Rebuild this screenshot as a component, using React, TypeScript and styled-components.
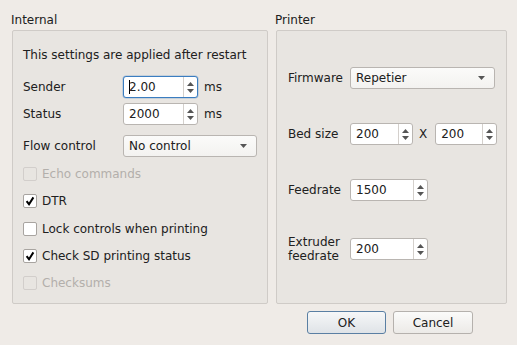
import React from "react";
import styled, { createGlobalStyle } from "styled-components";

const colors = {
  window: "#efebe7",
  group: "#e8e5e1",
  frame: "#cfcbc7",
  field: "#ffffff",
  fieldBorder: "#b9b5b1",
  focus: "#3b7dc0",
  text: "#202020",
  disabled: "#b3afab",
  arrow: "#555555",
};

const GlobalStyle = createGlobalStyle`
  html, body {
    margin: 0;
    padding: 0;
    background: ${colors.window};
  }
  body {
    font-family: "DejaVu Sans", "Liberation Sans", sans-serif;
    font-size: 12px;
    color: ${colors.text};
  }
`;

const Window = styled.div`
  width: 517px;
  height: 345px;
  box-sizing: border-box;
  padding: 13px 0 0 12px;
  background: ${colors.window};
`;

const Columns = styled.div`
  display: flex;
  gap: 8px;
`;

const Group = styled.div<{ $w: number }>`
  width: ${(p) => p.$w}px;
  display: flex;
  flex-direction: column;
`;

const GroupTitle = styled.div`
  margin-left: -1px;
  line-height: 14px;
  height: 14px;
  margin-bottom: 3px;
`;

const Frame = styled.div<{ $pl: number }>`
  height: 274px;
  box-sizing: border-box;
  border: 1px solid ${colors.frame};
  border-radius: 2px;
  background: ${colors.group};
  padding-left: ${(p) => p.$pl}px;
  display: flex;
  flex-direction: column;
`;

const Note = styled.div`
  margin-top: 17px;
  line-height: 14px;
  height: 14px;
`;

const Row = styled.div<{ $top: number; $h?: number }>`
  display: flex;
  align-items: center;
  margin-top: ${(p) => p.$top}px;
  height: ${(p) => p.$h ?? 22}px;
`;

const Label = styled.div<{ $w: number }>`
  width: ${(p) => p.$w}px;
  flex: none;
  line-height: 14px;
`;

const Unit = styled.span`
  margin-left: 6px;
`;

const Field = styled.div<{ $w: number; $focus?: boolean }>`
  width: ${(p) => p.$w}px;
  height: 22px;
  box-sizing: border-box;
  display: flex;
  align-items: stretch;
  background: ${colors.field};
  border: 1px solid ${(p) => (p.$focus ? colors.focus : colors.fieldBorder)};
  border-radius: 3px;
  box-shadow: ${(p) => (p.$focus ? "0 0 0 0.5px rgba(59,125,192,0.4)" : "none")};
`;

const FieldText = styled.div`
  flex: 1;
  display: flex;
  align-items: center;
  padding-left: 5px;
  line-height: 14px;
`;

const Caret = styled.span`
  display: inline-block;
  width: 0;
  height: 14px;
  border-left: 1px solid #000;
  margin-right: -1px;
`;

const SpinButtons = styled.div`
  width: 13px;
  flex: none;
  border-left: 1px solid #d4d0cc;
  display: flex;
  flex-direction: column;
  align-items: center;
  justify-content: center;
  gap: 3px;
`;

const Combo = styled.div<{ $w: number }>`
  width: ${(p) => p.$w}px;
  height: 22px;
  box-sizing: border-box;
  display: flex;
  align-items: center;
  justify-content: space-between;
  padding: 0 9px 0 5px;
  border: 1px solid ${colors.fieldBorder};
  border-radius: 3px;
  background: linear-gradient(#fbfbfa, #f3f2f0);
`;

const Times = styled.span`
  margin: 0 8px 0 6px;
`;

const CheckRow = styled.label<{ $top: number; $disabled?: boolean }>`
  display: flex;
  align-items: center;
  gap: 5px;
  margin-top: ${(p) => p.$top}px;
  height: 14px;
  line-height: 14px;
  color: ${(p) => (p.$disabled ? colors.disabled : colors.text)};
`;

const Box = styled.span<{ $disabled?: boolean }>`
  width: 14px;
  height: 14px;
  box-sizing: border-box;
  display: flex;
  align-items: center;
  justify-content: center;
  border: 1px solid ${(p) => (p.$disabled ? "#d2cecb" : "#a8a4a0")};
  border-radius: 2px;
  background: ${(p) => (p.$disabled ? "transparent" : colors.field)};
`;

const TwoLine = styled.div`
  width: 62px;
  flex: none;
  line-height: 14px;
`;

const ButtonBar = styled.div`
  display: flex;
  gap: 7px;
  margin: 7px 0 0 295px;
`;

const Button = styled.button<{ $default?: boolean }>`
  width: ${(p) => (p.$default ? 79 : 80)}px;
  height: 23px;
  box-sizing: border-box;
  font-family: inherit;
  font-size: 12px;
  color: ${colors.text};
  border: 1px solid ${(p) => (p.$default ? "#5a7fa3" : "#b5b1ad")};
  border-radius: 3px;
  background: ${(p) =>
    p.$default
      ? "linear-gradient(#f6f7f8, #dfe3e7)"
      : "linear-gradient(#fbfbfa, #eceae7)"};
  padding: 0;
`;

const Arrow = ({ down }: { down?: boolean }) => (
  <svg width="7" height="4" viewBox="0 0 7 4">
    <path d={down ? "M0 0 L7 0 L3.5 4 Z" : "M0 4 L7 4 L3.5 0 Z"} fill={colors.arrow} />
  </svg>
);

const Spin: React.FC<{ value: string; w: number; focus?: boolean }> = ({ value, w, focus }) => (
  <Field $w={w} $focus={focus}>
    <FieldText>
      {focus && <Caret />}
      {value}
    </FieldText>
    <SpinButtons>
      <Arrow />
      <Arrow down />
    </SpinButtons>
  </Field>
);

const Select: React.FC<{ value: string; w: number }> = ({ value, w }) => (
  <Combo $w={w}>
    <span>{value}</span>
    <Arrow down />
  </Combo>
);

const Check: React.FC<{ label: string; top: number; checked?: boolean; disabled?: boolean }> = ({
  label,
  top,
  checked,
  disabled,
}) => (
  <CheckRow $top={top} $disabled={disabled}>
    <Box $disabled={disabled}>
      {checked && (
        <svg width="10" height="10" viewBox="0 0 10 10">
          <path d="M1.6 5.2 L4 8.2 L8.4 1.4" fill="none" stroke="#000" strokeWidth="2" />
        </svg>
      )}
    </Box>
    {label}
  </CheckRow>
);

export default function App() {
  return (
    <Window>
      <GlobalStyle />
      <Columns>
        <Group $w={256}>
          <GroupTitle>Internal</GroupTitle>
          <Frame $pl={10}>
            <Note>This settings are applied after restart</Note>
            <Row $top={14}>
              <Label $w={100}>Sender</Label>
              <Spin value="2.00" w={75} focus />
              <Unit>ms</Unit>
            </Row>
            <Row $top={5}>
              <Label $w={100}>Status</Label>
              <Spin value="2000" w={75} />
              <Unit>ms</Unit>
            </Row>
            <Row $top={10}>
              <Label $w={100}>Flow control</Label>
              <Select value="No control" w={134} />
            </Row>
            <Check label="Echo commands" top={10} disabled />
            <Check label="DTR" top={13} checked />
            <Check label="Lock controls when printing" top={14} />
            <Check label="Check SD printing status" top={13} checked />
            <Check label="Checksums" top={13} disabled />
          </Frame>
        </Group>
        <Group $w={231}>
          <GroupTitle>Printer</GroupTitle>
          <Frame $pl={11}>
            <Row $top={36}>
              <Label $w={62}>Firmware</Label>
              <Select value="Repetier" w={145} />
            </Row>
            <Row $top={34}>
              <Label $w={62}>Bed size</Label>
              <Spin value="200" w={63} />
              <Times>X</Times>
              <Spin value="200" w={62} />
            </Row>
            <Row $top={34}>
              <Label $w={62}>Feedrate</Label>
              <Spin value="1500" w={78} />
            </Row>
            <Row $top={34} $h={28}>
              <TwoLine>
                Extruder
                <br />
                feedrate
              </TwoLine>
              <Spin value="200" w={78} />
            </Row>
          </Frame>
        </Group>
      </Columns>
      <ButtonBar>
        <Button $default>OK</Button>
        <Button>Cancel</Button>
      </ButtonBar>
    </Window>
  );
}
